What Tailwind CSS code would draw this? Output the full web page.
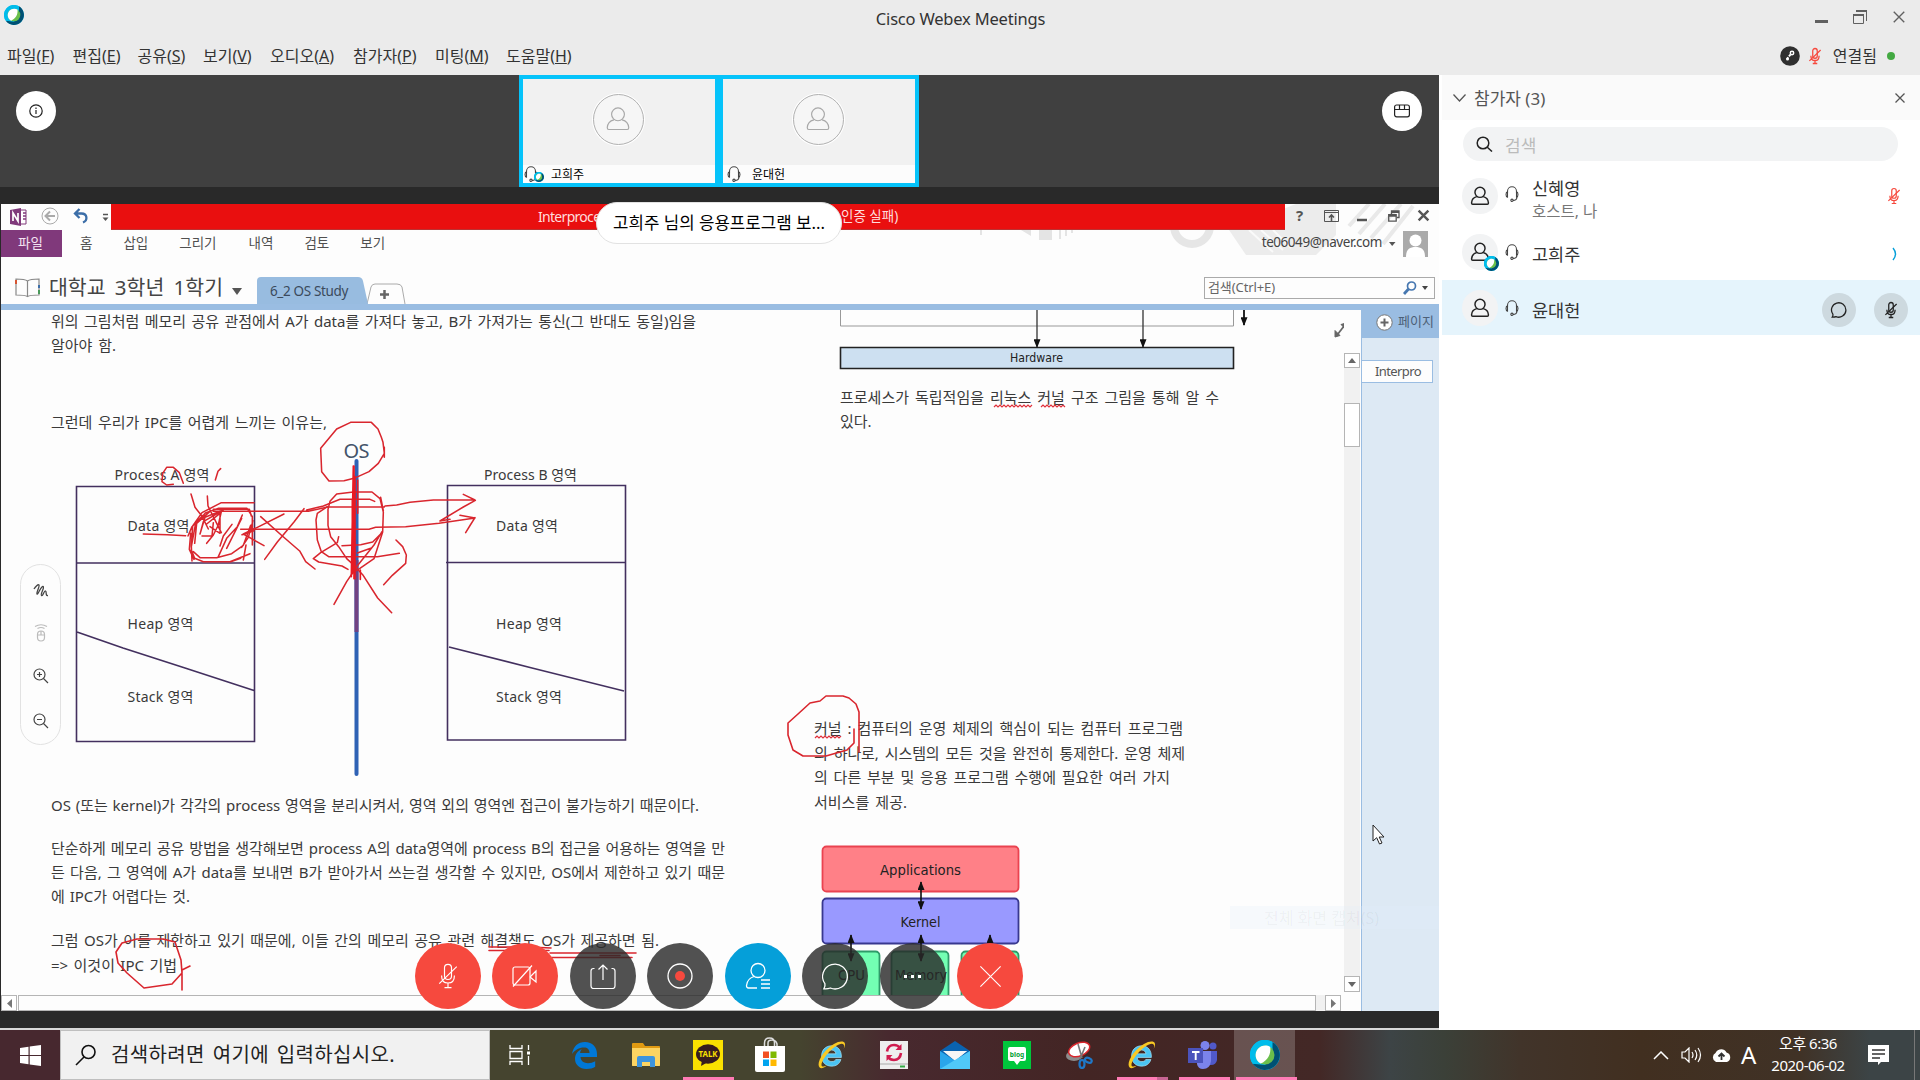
<!DOCTYPE html>
<html lang="ko">
<head>
<meta charset="utf-8">
<title>Cisco Webex Meetings</title>
<script src="https://cdn.jsdelivr.net/npm/@tailwindcss/browser@4"></script>
</head>
<body class="w-[1920px] h-[1080px] overflow-hidden flex flex-col bg-white font-['Noto_Sans','Noto_Sans_CJK_KR',sans-serif] text-[#333]">
<svg class="hidden">
  <defs>
    <symbol id="webex" viewBox="0 0 24 24">
      <circle cx="12" cy="12" r="12" fill="#00bceb"/>
      <path d="M2.2 19A12 12 0 1 0 18 1.6L15 6l4 6-7 8z" fill="#005073"/>
      <path d="M18 1.6A12 12 0 0 0 2.2 19L8 18 18 8z" fill="#00bceb"/>
      <circle cx="12" cy="12" r="7.6" fill="#6abf4b"/>
      <path d="M8.5 18.8C4 16.500 3.400 10.500 6.200 7.200 9 3.800 13.500 3.800 16.200 5.500 17 11.500 14 16.500 8.500 18.800z" fill="#fff"/>
    </symbol>
    <symbol id="headset" viewBox="0 0 16 20">
      <g fill="none" stroke="currentColor" stroke-width="1.2">
        <path d="M3 9V7a5 5 0 0 1 10 0v2"/><path d="M3 7.500C.8 8 .8 13 3 13.500zM13 7.500C15.200 8 15.200 13 13 13.500z"/><path d="M13.500 13c0 3-2 4.200-4.500 4.200"/><circle cx="8" cy="17" r="1.300"/>
      </g>
    </symbol>
    <symbol id="person" viewBox="0 0 24 24">
      <g fill="none" stroke="currentColor"><circle cx="12" cy="8" r="5.500"/><path d="M8.500 12.700C5 13.500 3 15.500 2.800 19.500c0 1 .4 1.500 1.200 1.500h16c.8 0 1.200-.5 1.200-1.500-.2-4-2.200-6-5.700-6.800"/></g>
    </symbol>
    <symbol id="micoff" viewBox="0 0 24 24">
      <g fill="none" stroke="currentColor"><rect x="9" y="2" width="6" height="13" rx="3"/><path d="M6.500 11.500c0 4 2 6.500 5.500 6.500s5.500-2.500 5.500-6.500M12 18v4M9 22h6M4.500 18.500L19.500 4"/></g>
    </symbol>
    <symbol id="bubble" viewBox="0 0 24 24">
      <path d="M3 21.500c.9-1.300 1.100-2.600.8-3.900A9.600 9.600 0 1 1 8 20.900c-1.500.6-3.200.8-5 .6z" fill="none" stroke="currentColor"/>
    </symbol>
    <symbol id="x" viewBox="0 0 24 24"><path d="M3 3l18 18M21 3L3 21" fill="none" stroke="currentColor"/></symbol>
    <symbol id="ie" viewBox="0 0 32 32">
      <path d="M16 6c6.500 0 10.500 4.600 10.200 12H11.500c.3 3 2.300 4.300 4.900 4.300 2 0 3.300-.7 4-2.200h5.300C24.300 24.800 20.800 27 16.200 27 9.600 27 5.800 22.600 5.800 16.500S9.800 6 16 6zm-4.400 8.300h8.900c-.2-2.500-2-3.900-4.400-3.900-2.500 0-4.100 1.500-4.500 3.900z" fill="#4ac4f3" stroke="#a9e6fb" stroke-width=".7"/>
      <path d="M3.800 28.500C-.5 24 8 10 18.500 4 24 .8 29 .6 29.800 3.500c.4 1.600 0 3.500-1.200 5.800 1-3.600.4-5.500-2.100-5.400-3 0-9 3.800-14 9.600C6.800 20 4 26.800 6.700 27.300c1.100.2 2.600-.2 4.300-1.100-2.600 2.500-5.600 3.700-7.200 2.300z" fill="#f9c924"/>
    </symbol>
  </defs>
</svg>

<!-- window header -->
<header class="h-[75px] shrink-0 bg-[#ebebeb] flex flex-col">
  <div class="h-[38px] flex items-center justify-between px-1">
    <svg class="size-5 -mt-2" viewBox="0 0 24 24"><use href="#webex"/></svg>
    <h1 class="ml-[82px] text-[16.500px] tracking-[-0.2px]">Cisco Webex Meetings</h1>
    <div class="flex items-center gap-[25px] mr-[10px] -mt-1 text-[#606060]">
      <svg width="13" height="14"><path d="M0 11.500h13" stroke="currentColor" stroke-width="3"/></svg>
      <svg width="14" height="14" fill="none" stroke="currentColor"><path d="M.5 4.500h10v9H.5z"/><path d="M0 5h11" stroke-width="2"/><path d="M3 1h11" stroke-width="2"/><path d="M13.500 1v10"/></svg>
      <svg width="14" height="14" class="stroke-[2.400]"><use href="#x"/></svg>
    </div>
  </div>
  <div class="h-9 flex items-center justify-between text-[16px]">
    <nav class="flex h-9 pl-[7px] leading-9 whitespace-nowrap">
      <span class="w-[65.500px]">파일(<u>F</u>)</span><span class="w-[65px]">편집(<u>E</u>)</span><span class="w-[65.500px]">공유(<u>S</u>)</span><span class="w-[67px]">보기(<u>V</u>)</span><span class="w-[83px]">오디오(<u>A</u>)</span><span class="w-[82px]">참가자(<u>P</u>)</span><span class="w-[71px]">미팅(<u>M</u>)</span><span>도움말(<u>H</u>)</span>
    </nav>
    <div class="flex items-center mr-[25px]">
      <svg width="20" height="20"><circle cx="10" cy="10" r="9.800" fill="#2f2f2f"/><circle cx="12" cy="7" r="1.700" fill="none" stroke="#fff" stroke-width="1.500"/><path d="M10.500 8.500L7 13" stroke="#fff" stroke-width="2" stroke-dasharray="2.500 1"/><circle cx="7.500" cy="13" r="1.500" fill="#fff"/></svg>
      <svg class="ml-[6px] size-[18px] text-[#f6493e] stroke-[1.7]"><use href="#micoff"/></svg>
      <span class="ml-[9px] leading-9">연결됨</span>
      <span class="ml-[10px] size-2 rounded-full bg-[#43a942]"></span>
    </div>
  </div>
</header>

<div class="h-[955px] shrink-0 flex">
<main class="relative w-[1439px] h-[955px] flex flex-col bg-[#292929]">
  <!-- video strip -->
  <section class="h-[112px] bg-[#404040] flex justify-between">
    <div class="mt-4 ml-4 size-10 rounded-full bg-white flex items-center justify-center">
      <svg width="14" height="14" fill="none" stroke="#222" stroke-width="1.200"><circle cx="7" cy="7" r="6.200"/><path d="M7 6v4M7 3.600v1.300"/></svg>
    </div>
    <div class="flex">
      <div class="w-[200px] h-[112px] border-4 border-[#05c3fa] bg-[#f1f1f1] flex flex-col">
        <div class="h-[86px] pb-[6px] pr-[2px] flex items-center justify-center"><div class="size-[51px] rounded-full border border-[#b0b0b0] ring-1 ring-white bg-[#f6f6f6] flex items-center justify-center"><svg class="size-[28px] text-[#a8a8a8]"><use href="#person"/></svg></div></div>
        <div class="flex-1 bg-[#fcfcfc] flex items-center relative"><svg class="w-4 h-[18px] text-[#444]"><use href="#headset"/></svg><svg class="absolute left-[11px] top-[7px] size-[10px]" viewBox="0 0 24 24"><use href="#webex"/></svg><span class="ml-[12px] mt-[2px] text-[12px] leading-none text-black">고희주</span></div>
      </div>
      <div class="w-[200px] h-[112px] border-4 border-[#05c3fa] bg-[#f1f1f1] flex flex-col">
        <div class="h-[86px] pb-[6px] pr-[2px] flex items-center justify-center"><div class="size-[51px] rounded-full border border-[#b0b0b0] ring-1 ring-white bg-[#f6f6f6] flex items-center justify-center"><svg class="size-[28px] text-[#a8a8a8]"><use href="#person"/></svg></div></div>
        <div class="flex-1 bg-[#fcfcfc] flex items-center pl-[3px]"><svg class="w-4 h-[18px] text-[#444]"><use href="#headset"/></svg><span class="ml-[10px] mt-[2px] text-[12px] leading-none text-black">윤대헌</span></div>
      </div>
    </div>
    <div class="mt-4 mr-[17px] size-10 rounded-full bg-white flex items-center justify-center">
      <svg width="16" height="14" fill="none" stroke="#222" stroke-width="1.200"><rect x=".6" y="1" width="14.800" height="11.800" rx="2"/><path d="M.6 5.500h14.800M5.500 1v4.500M10.500 1v4.500"/></svg>
    </div>
  </section>

  <!-- shared OneNote window -->
  <section class="mt-[17px] ml-px h-[807px] w-[1438px] flex flex-col bg-[#fdfdfd] text-[#444]">
    <div class="relative h-[106px] flex flex-col border-b-[6px] border-[#9abde2]">
      <svg class="absolute right-0 top-0" width="480" height="60" fill="none">
        <path d="M22 26v6M62 26l10 0 0 6zM80 26h13v10H80zM101 26v9M107 26v6M113 26v3" stroke="none" fill="#e4e4e4"/>
        <path d="M22 26v5M101 26v9M107 26v6M113 26v3" stroke="#e4e4e4" stroke-width="2"/>
        <path d="M215 22a18 18 0 0 0 36 0" stroke="#e6e6e6" stroke-width="8"/>
        <path d="M270 26l17 25h70l20-20V0h-40z" fill="#ececec"/>
        <path d="M390 22L410 0M400 30l26-30M412 34L442 0M424 40l30-38" stroke="#e9e9e9" stroke-width="4"/>
        <path d="M290 26l24 22M302 26l22 20M314 26l18 18" stroke="#fafafa" stroke-width="2"/>
      </svg>
      <div class="relative h-[26px] flex">
        <div class="w-[110px] flex items-center">
          <svg class="ml-[9px]" width="18" height="18"><path d="M7 2h9v14H7z" fill="#fff" stroke="#80397b"/><path d="M13 5h3M13 8h3M13 11h3" stroke="#80397b" stroke-width="1.500"/><path d="M0 2l11-2v18L0 16z" fill="#80397b"/><path d="M3 13V5l5 8V5" fill="none" stroke="#fff" stroke-width="1.700"/></svg>
          <svg class="ml-[13px] -mt-[2px]" width="18" height="18" fill="none" stroke="#aaa"><circle cx="9" cy="9" r="8"/><path d="M14 9H5M9 4.500L4.500 9 9 13.500" stroke-width="2"/></svg>
          <svg class="ml-[14px] -mt-[2px]" width="16" height="16" fill="none" stroke="#3c6ea8" stroke-width="2.300"><path d="M6.500 1L2 5.500 6.500 10M2 5.500h6.500c6 0 6.500 7 1.500 9"/></svg>
          <svg class="ml-[13px]" width="7" height="9"><path d="M1 1.500h5" stroke="#555" stroke-width="1.500"/><path d="M.5 4.500h6l-3 3.500z" fill="#555"/></svg>
        </div>
        <div class="w-[1174px] h-[26px] bg-[#e90f0f] border-b border-[#b33] flex items-center text-[14px] text-[#ffdcdc] whitespace-nowrap leading-none">
          <span class="ml-[427px] w-[303px] tracking-[-0.7px]">Interprocess</span><span class="text-[13.500px]">인증 실패)</span>
        </div>
        <div class="flex items-center text-[#555] ml-[11px] gap-[18px]">
          <b class="text-[15px] leading-none w-[10px] -mt-1">?</b>
          <svg width="15" height="12" fill="none" stroke="currentColor" class="-mt-[3px]"><path d="M.5.5h14v11H.5zM.5 2.500h14" /><path d="M7.500 11V5M5 7.500L7.500 5 10 7.500" stroke-width="1.600"/></svg>
          <svg width="10" height="12"><path d="M0 9h10" stroke="currentColor" stroke-width="2.500"/></svg>
          <svg class="ml-[3px] -mt-[3px]" width="12" height="12" fill="none" stroke="currentColor" stroke-width="1.300"><path d="M.7 4.700h7.500v6.500H.7zM.7 6h7.500M3.500 4V1h7.500v6.500H9M3.500 2.300H11"/></svg>
          <svg class="stroke-[4.500] -ml-px size-[13px] -mt-[3px]"><use href="#x"/></svg>
        </div>
      </div>
      <div class="relative h-[27px] flex items-center justify-between text-[13.500px] leading-none">
        <div class="flex items-center h-[27px] text-[#505050]">
          <span class="w-[61px] h-[27px] bg-[#80397b] text-[#f3e4f2] flex items-center justify-center pr-[2px]">파일</span>
          <span class="ml-[18px]">홈</span><span class="ml-[31px]">삽입</span><span class="ml-[31px]">그리기</span><span class="ml-[32px]">내역</span><span class="ml-[31px]">검토</span><span class="ml-[31px]">보기</span>
        </div>
        <div class="flex items-center mr-[11px]">
          <span class="text-[13.500px] tracking-[-0.45px] -mt-[2px]">te06049@naver.com</span>
          <svg class="ml-[7px]" width="7" height="4"><path d="M0 0h6.500L3.200 4z" fill="#555"/></svg>
          <svg class="ml-[7px]" width="25" height="26"><path d="M0 0h25v26H0z" fill="#aaa"/><circle cx="12.500" cy="9.500" r="6" fill="#fff"/><path d="M3 26c0-8 4-10 9.500-10S22 18 22 26z" fill="#fff"/></svg>
        </div>
      </div>
      <div class="flex-1 flex items-end relative">
        <svg class="ml-[14px] mb-[6px]" width="25" height="21" fill="none" stroke="#888" stroke-width="1.200"><path d="M12.500 4C10 2 5 2 1 2v16c4 0 9 0 11.500 1.500C15 18 20 18 24 18V2c-4 0-9 0-11.500 2zM12.500 4v15"/><path d="M1 3v4" stroke="#d65532" stroke-width="2"/><path d="M24 8v3" stroke="#3c6ea8" stroke-width="2"/><path d="M24 13v4" stroke="#4a9a5a" stroke-width="2"/></svg>
        <span class="ml-[9px] mb-[7px] text-[20.500px] leading-[20px] whitespace-nowrap w-[174px] [text-align-last:justify]">대학교 3학년 1학기</span>
        <svg class="ml-[9px] mb-[9px]" width="10" height="7"><path d="M0 0h10L5 7z" fill="#555"/></svg>
        <svg class="absolute left-[256px] bottom-0" width="150" height="27"><path d="M110 27l4-17q1-3 4-3h22q4 0 5 3l3 17" fill="#fdfdfd" stroke="#aaa"/><path d="M123 17.500h9M127.500 13v9" stroke="#666" stroke-width="2.500"/><path d="M0 27V4q0-4 4-4h97q4 0 5 4l5 23z" fill="#98bce0"/></svg>
        <span class="absolute left-[269px] bottom-[6px] text-[13.500px] leading-[14px] tracking-[-0.35px] text-[#3b4a5c]">6_2 OS Study</span>
        <div class="absolute right-[4px] bottom-[5px] w-[231px] h-[22px] border border-[#aaa] bg-[#fdfdfd] flex items-center pl-[3px] text-[13px] leading-none text-[#666]">
          <span class="tracking-[-0.1px] flex-1 -mt-[2px]">검색(Ctrl+E)</span>
          <svg width="14" height="14" fill="none" stroke="#4677b0"><circle cx="8.500" cy="5" r="4" stroke-width="1.700"/><path d="M5.500 8L1 13" stroke-width="2.800"/></svg>
          <svg class="ml-[5px] mr-[5px]" width="7" height="4"><path d="M0 0h6L3 4z" fill="#444"/></svg>
        </div>
      </div>
    </div>

    <div class="h-[701px] flex">
      <div class="w-[1360px] flex flex-col">
        <div class="h-[685px] flex">
          <!-- note canvas: everything here is placed freely by its author -->
          <div class="relative w-[1343px] h-[685px] overflow-hidden text-[15px] leading-6 text-[#3a3a3a]">
            <div class="absolute left-[50px] top-[-1px] whitespace-nowrap">
              <p class="w-[645px] [text-align-last:justify]">위의 그림처럼 메모리 공유 관점에서 A가 data를 가져다 놓고, B가 가져가는 통신(그 반대도 동일)임을</p>
              <p class="w-[65px] [text-align-last:justify]">알아야 함.</p>
              <p class="mt-[53px] w-[276px] [text-align-last:justify]">그런데 우리가 IPC를 어렵게 느끼는 이유는,</p>
            </div>
            <div class="absolute left-[50px] top-[483px] whitespace-nowrap">
              <p class="w-[648px] [text-align-last:justify]">OS (또는 kernel)가 각각의 process 영역을 분리시켜서, 영역 외의 영역엔 접근이 불가능하기 때문이다.</p>
              <p class="mt-[19px] w-[674px] [text-align-last:justify] tracking-[-0.1px]">단순하게 메모리 공유 방법을 생각해보면 process A의 data영역에 process B의 접근을 어용하는 영역을 만</p>
              <p class="w-[674px] [text-align-last:justify]">든 다음, 그 영역에 A가 data를 보내면 B가 받아가서 쓰는걸 생각할 수 있지만, OS에서 제한하고 있기 때문</p>
              <p class="w-[139px] [text-align-last:justify]">에 IPC가 어렵다는 것.</p>
              <p class="mt-[20px] w-[608px] [text-align-last:justify]">그럼 OS가 이를 제한하고 있기 때문에, 이들 간의 메모리 공유 관련 해결책도 OS가 제공하면 됨.</p>
              <p class="mt-px w-[126px] [text-align-last:justify]">=&gt; 이것이 IPC 기법</p>
            </div>
            <div class="absolute left-[839px] top-[75px] whitespace-nowrap">
              <p class="w-[379px] [text-align-last:justify]">프로세스가 독립적임을 리눅스 커널 구조 그림을 통해 알 수</p>
              <p>있다.</p>
            </div>
            <div class="absolute left-[813px] top-[406px] whitespace-nowrap leading-[24.600px]">
              <p class="w-[369px] [text-align-last:justify]">커널 : 컴퓨터의 운영 체제의 핵심이 되는 컴퓨터 프로그램</p>
              <p class="w-[371px] [text-align-last:justify] tracking-[-0.1px]">의 하나로, 시스템의 모든 것을 완전히 통제한다. 운영 체제</p>
              <p class="w-[356px] [text-align-last:justify]">의 다른 부분 및 응용 프로그램 수행에 필요한 여러 가지</p>
              <p class="w-[93px] [text-align-last:justify]">서비스를 제공.</p>
            </div>
            <svg class="absolute inset-0" width="1343" height="685" viewBox="1 310 1343 685" fill="none">
              <defs><marker id="arr" viewBox="0 0 10 8" refX="9" refY="4" markerWidth="9" markerHeight="7" markerUnits="userSpaceOnUse" orient="auto-start-reverse"><path d="M0 0L10 4 0 8z" fill="#111"/></marker></defs>
              <!-- process diagrams -->
              <g stroke="#43305f" stroke-width="1.600">
                <path d="M76.500 486.500h178v255h-178zM76.500 563h178M77 632l46 16 62 20 69 22.500"/>
                <path d="M447.500 485.500h178v254.500h-178zM446 562.500h179.500M449 647l83 21 92 23"/>
              </g>
              <path d="M356.500 461v313" stroke="#2f62b5" stroke-width="4" stroke-linecap="round"/>
              <path d="M356.500 560v72" stroke="#714282" stroke-width="4"/>
              <g fill="#3a3a3a" font-size="14">
                <text x="114.500" y="480" textLength="95">Process A 영역</text><text x="484" y="480" textLength="93">Process B 영역</text>
                <text x="127.500" y="530.500" textLength="62">Data 영역</text><text x="127.500" y="629" textLength="66">Heap 영역</text><text x="127.500" y="702" textLength="66">Stack 영역</text>
                <text x="496" y="530.500" textLength="62">Data 영역</text><text x="496" y="629" textLength="66">Heap 영역</text><text x="496" y="702" textLength="66">Stack 영역</text>
              </g>
              <text x="343.500" y="458" font-size="20" fill="#44546a" textLength="26">OS</text>
              <!-- linux hardware diagram -->
              <path d="M840.500 310v16h393v-16" stroke="#999"/>
              <path d="M840.500 347.500h393v21h-393z" fill="#cde0f1" stroke="#222" stroke-width="1.600"/>
              <path d="M1037 310v37" stroke="#333" stroke-width="1.300" marker-end="url(#arr)"/><path d="M1143 310v37" stroke="#333" stroke-width="1.300" marker-end="url(#arr)"/><path d="M1244 310v15" stroke="#111" stroke-width="1.800" marker-end="url(#arr)"/>
              <text x="1010" y="362" font-size="12" fill="#222" font-family="DejaVu Sans, sans-serif" textLength="53" lengthAdjust="spacingAndGlyphs">Hardware</text>
              <!-- kernel layers -->
              <g stroke-width="1.800">
                <rect x="822.500" y="846.500" width="196" height="45" rx="4" fill="#ff8087" stroke="#ea4350"/>
                <rect x="822.500" y="898.500" width="196" height="45" rx="4" fill="#9999ff" stroke="#38388f"/>
                <g fill="#73ffb3" stroke="#2f9a69"><rect x="822.500" y="951.500" width="57" height="60" rx="4"/><rect x="891.500" y="951.500" width="57" height="60" rx="4"/><rect x="961.500" y="951.500" width="57" height="60" rx="4"/></g>
              </g>
              <g stroke="#111" stroke-width="1.600"><path d="M921 882v27" marker-start="url(#arr)" marker-end="url(#arr)"/><path d="M851 935v26" marker-start="url(#arr)" marker-end="url(#arr)"/><path d="M921 935v26" marker-start="url(#arr)" marker-end="url(#arr)"/><path d="M990 935v26" marker-start="url(#arr)" marker-end="url(#arr)"/></g>
              <g font-family="DejaVu Sans, sans-serif" font-size="13.500" fill="#222"><text x="880" y="874.500" textLength="81" lengthAdjust="spacingAndGlyphs">Applications</text><text x="900.500" y="926.500" textLength="40" lengthAdjust="spacingAndGlyphs">Kernel</text><text x="838" y="979.500" textLength="27" lengthAdjust="spacingAndGlyphs">CPU</text><text x="895" y="979.500" textLength="52" lengthAdjust="spacingAndGlyphs">Memory</text></g>
              <!-- spelling squiggles -->
              <g stroke="#e0303a" stroke-width="1.200"><path d="M994 407l2-2 2 2 2-2 2 2 2-2 2 2 2-2 2 2 2-2 2 2 2-2 2 2 2-2 2 2 2-2 2 2 2-2 2 2 2-2"/><path d="M1041 407l2-2 2 2 2-2 2 2 2-2 2 2 2-2 2 2 2-2 2 2 2-2 2 2"/><path d="M815 738l2-2 2 2 2-2 2 2 2-2 2 2 2-2 2 2 2-2 2 2 2-2 2 2 2-2"/></g>
              <!-- red ink -->
              <g transform="translate(180 410) scale(.33333)" stroke="#d9262e" stroke-width="4.600" stroke-linecap="round" stroke-linejoin="round">
                <path d="M512 37h62l20 20 10 25 5 15 4 33-18 30-28 25-45 20-30 7-45 1-22-28-3-70 48-58 42-20M613 112v30"/>
                <path d="M-20 172h-20l-12 18-2 25 14 10 20-2M-20 172l18 16 12 32M122 176l-8 8-8 26"/>
                <path d="M33 252l12 40 20 25 20 40M82 258l2 30 40 80M80 400l20-25 15-30 10-45M66 378h30l4-40M222 278h-98l-58 30-28 40-4 60 2 45M60 372l15-50 55-22-60 35-8 30M80 342l40-32 0 60-30-20M34 420l10 25 26 10h82l30-10M34 410l12-65 30-36 40-14 85 0 16 25 0 85M44 400l6-60 40-36M120 408l10-30 26-35M115 440l25-55 32-35 15-35M140 415l45-90M40 425l20 18h50l45-12 35-25 22-60M185 412l20-30 14-50M24 378l12-28 34-35M-110 372l72 2 55 3M42 448l-14-30 4-48M100 298h108l6 20M150 455l60-24M190 450l8-45"/>
                <path d="M100 304h285l58-13h170M380 300l50-12 50-20h90l14 6M615 288l35-3 40-8 70-7h125l-35-17M886 271l-36 20-70 42M182 358h385l20-6 90-2 100-10 108-16-45-8M885 323l-14 22-14 23M780 333l30-5"/>
                <path d="M312 312l-80 40-42 20 62 35M186 374l36-12M242 320l65 58 52 45 18 32 28 22M372 296l-30 40-50 60-38 52"/>
                <path d="M470 252l-20 22-6 24v48l8 34 24 30 24 36 20 18 28 30 45 70 42 44M470 252l50-6h56l24 20 10 40-2 60-26 80-52 36M412 310l-4 20 4 60 12 35 22 15h70M412 310l30-20M608 366l-30 30-36 8-56 3M602 262l8 40M606 365l-24 40-48 60-34 50-38 68M476 380l-4 18-50 30-22 18 16 10 70 12 18 10M446 440l146 0 66-10M572 415l-40 14M648 390l20 20 11 25-2 25-40 36-26 28"/>
                <path d="M520 168l-6 332M525 200v306M533 210v100M517 270v220M541 480v28M522 168v338" stroke="#e81923" stroke-width="5"/>
              </g>
              <g stroke="#d9262e" stroke-width="1.600" stroke-linecap="round" stroke-linejoin="round">
                <path d="M859 752v-40l-3-8-7-6-6-2h-17l-6 5-10 2-12 11-10 9v12l5 15 10 6h23l21-6 7-7v-14"/>
                <path d="M489 947h40l22 1M489 950.500h60M550 953h86M552 957.500h80M600 955.500h20"/>
                <path d="M182 990v-20l8-4M182 973l-10 11-28 4-17-15-9-10-2-11 6-9 15-4h26l12 3 6 18 1 13"/>
              </g>
              <path d="M1337.500 334.500l7-9" stroke="#666" stroke-width="1.800"/><path d="M1335 337v-6.500l5 5zM1346 323v6.500l-5-5z" fill="#666" stroke="#666"/>
            </svg>
          </div>
          <!-- vertical scrollbar -->
          <div class="w-4 mt-[43px] h-[639px] bg-[#f1f1f1] flex flex-col">
            <div class="h-[15px] border border-[#b5b5b5] bg-white flex items-center justify-center"><svg width="8" height="5"><path d="M0 5h8L4 0z" fill="#666"/></svg></div>
            <div class="mt-[35px] h-11 border border-[#b5b5b5] bg-white"></div>
            <div class="mt-auto h-4 border border-[#b5b5b5] bg-white flex items-center justify-center"><svg width="8" height="5"><path d="M0 0h8L4 5z" fill="#666"/></svg></div>
          </div>
        </div>
        <div class="h-4 flex">
          <div class="w-4 h-4 border border-[#b5b5b5] bg-white flex items-center justify-center"><svg width="5" height="9"><path d="M5 0v9L0 4.500z" fill="#777"/></svg></div>
          <div class="ml-px w-[1298px] h-4 border border-[#b5b5b5] bg-[#fdfdfd]"></div>
          <div class="w-[9px] bg-[#f1f1f1]"></div>
          <div class="w-4 h-4 border border-[#b5b5b5] bg-white flex items-center justify-center"><svg width="5" height="9"><path d="M0 0v9l5-4.500z" fill="#777"/></svg></div>
        </div>
      </div>
      <!-- page list -->
      <div class="w-[78px] border-l border-[#9abde2] bg-[#dde9f4] flex flex-col text-[13px] leading-none whitespace-nowrap">
        <div class="h-[28px] bg-[#9abde2] pl-[14px] flex items-center gap-[5px] text-[#4d6076]">
          <svg class="shrink-0 -mt-1" width="17" height="17"><circle cx="8.500" cy="8.500" r="7.700" fill="#fff" stroke="#777"/><path d="M4.500 8.500h8M8.500 4.500v8" stroke="#666" stroke-width="2"/></svg><span class="-mt-[5px]">페이지</span>
        </div>
        <div class="mt-[22px] w-[71px] h-[23px] border border-l-0 border-[#9abde2] bg-[#fdfdfd] flex items-center pl-[13px] text-[#555] tracking-[-0.6px]">Interpro</div>
      </div>
    </div>
  </section>
  <div class="mt-[17px] h-[2px] bg-[#d8d8d8]"></div>

  <!-- fading context menu item -->
  <div class="absolute left-[1230px] top-[831px] w-[209px] h-[23px] bg-[#e4effa]/25 flex items-center pl-[34px] text-[16px] leading-none text-[#000]/5 whitespace-nowrap">전체 화면 캡처(S)</div>

  <!-- share banner -->
  <div class="absolute left-[596px] top-[127px] w-[246px] h-[42px] rounded-full bg-white border border-[#e2e2e2] flex items-center justify-center text-[16.800px] leading-none text-black whitespace-nowrap">고희주 님의 응용프로그램 보...</div>

  <!-- annotation tools -->
  <div class="absolute left-5 top-[489px] w-[41px] h-[181px] rounded-full bg-[#fdfdfd] border border-[#e2e2e2] flex flex-col items-center">
    <svg class="mt-[18px]" width="16" height="16" fill="none" stroke="#444" stroke-width="1.300"><path d="M1 6c1.500-2.500 4-5 5-4s-3 8-2 9 4-8 6-7.500-3 8-1.500 9 2.500-5 4-4.500-.5 5 2.500 4.500"/></svg>
    <svg class="mt-[25px]" width="16" height="18" fill="none" stroke="#bbb" stroke-width="1.200"><rect x="4.500" y="7" width="7" height="10" rx="3.500"/><path d="M4.500 11h7M8 7v4M4.500 4.500Q8 2.500 11.500 4.500M2 2.500q6-3.500 12 0"/></svg>
    <svg class="mt-[26px]" width="16" height="16" fill="none" stroke="#444" stroke-width="1.200"><circle cx="6.500" cy="6.500" r="5.500"/><path d="M10.500 10.500L15 15M6.500 4v5M4 6.500h5"/></svg>
    <svg class="mt-[29px]" width="16" height="16" fill="none" stroke="#444" stroke-width="1.200"><circle cx="6.500" cy="6.500" r="5.500"/><path d="M10.500 10.500L15 15M4 6.500h5"/></svg>
  </div>

  <!-- meeting controls -->
  <div class="absolute left-[414.500px] top-[868px] flex gap-[11.500px] text-white">
    <div class="size-[66px] rounded-full bg-[#f6493e] flex items-center justify-center"><svg class="size-[28px]"><use href="#micoff"/></svg></div>
    <div class="size-[66px] rounded-full bg-[#f6493e] flex items-center justify-center"><svg width="28" height="24" fill="none" stroke="currentColor" stroke-width="1.200"><rect x="2" y="3" width="17" height="18" rx="2"/><path d="M19 13l6-6v11l-6-5M2 22.500L21 1.500"/></svg></div>
    <div class="size-[66px] rounded-full bg-[#292929]/81 flex items-center justify-center"><svg width="26" height="26" fill="none" stroke="currentColor" stroke-width="1.200"><path d="M4.500 5.500H3.500Q1 5.500 1 8v15q0 2.500 2.500 2.500h19Q25 25.500 25 23V8q0-2.500-2.500-2.500H21.500M13 17V2M8.500 6.500L13 2l4.500 4.500"/></svg></div>
    <div class="size-[66px] rounded-full bg-[#292929]/81 flex items-center justify-center"><svg width="26" height="26"><circle cx="13" cy="13" r="12" fill="none" stroke="currentColor" stroke-width="1.300"/><circle cx="13" cy="13" r="5" fill="#f6493e"/></svg></div>
    <div class="size-[66px] rounded-full bg-[#059fd9] flex items-center justify-center"><svg width="26" height="28" fill="none" stroke="currentColor" stroke-width="1.300"><circle cx="13" cy="8.500" r="7"/><path d="M9 14.500c-5 1.500-7 4-7.500 9 0 2 1 2.500 2 2.500H12M16 18h9M16 22h9M16 26h9"/></svg></div>
    <div class="size-[66px] rounded-full bg-[#292929]/81 flex items-center justify-center"><svg class="size-[31px]"><use href="#bubble"/></svg></div>
    <div class="size-[66px] rounded-full bg-[#292929]/81 flex items-center justify-center gap-[4px]"><i class="size-[3px] bg-white"></i><i class="size-[3px] bg-white"></i><i class="size-[3px] bg-white"></i></div>
    <div class="size-[66px] rounded-full bg-[#f6493e] flex items-center justify-center"><svg class="size-[27px]"><use href="#x"/></svg></div>
  </div>

  <svg class="absolute left-[1372px] top-[749px]" width="14" height="21"><path d="M1 1v16l3.700-3.300L7.500 20l2.500-1-2.800-6H12z" fill="#fff" stroke="#222"/></svg>
</main>

<!-- participants -->
<aside class="flex-1 ml-[3px] flex flex-col bg-white">
  <div class="h-[45px] bg-[#fafafa] flex items-center pl-[11px] pr-[14px] text-[17px] text-[#555]">
    <svg width="13" height="8" fill="none" stroke="currentColor" stroke-width="1.300"><path d="M.5.500l6 6.500 6-6.500"/></svg>
    <span class="ml-[8px] flex-1 leading-none mt-px">참가자 (3)</span>
    <svg class="size-3 stroke-[2.600]"><use href="#x"/></svg>
  </div>
  <div class="mt-[7px] ml-[21px] w-[435px] h-[34px] rounded-full bg-[#f2f3f4] flex items-center pl-[13px] text-[17px] text-[#bbb]">
    <svg width="17" height="16" fill="none" stroke="#222" stroke-width="1.500"><circle cx="7" cy="7" r="5.800"/><path d="M11 11l5 4.500"/></svg>
    <span class="ml-[12px] mt-[2px] leading-none">검색</span>
  </div>
  <div class="mt-[7px] h-[56px] flex items-center pl-[20px] pr-[17px]">
    <div class="size-9 rounded-full bg-[#f2f3f4] flex items-center justify-center"><svg class="size-[22px] text-[#222] stroke-[1.600]"><use href="#person"/></svg></div>
    <svg class="ml-[6px] -mt-1 w-4 h-[18px] text-[#444]"><use href="#headset"/></svg>
    <div class="ml-[12px] flex-1"><div class="text-[17.500px] leading-[24px] mt-[6px]">신혜영</div><div class="text-[15.500px] leading-[22px] text-[#777]">호스트, 나</div></div>
    <svg class="size-[18px] text-[#f6493e] stroke-[1.600]"><use href="#micoff"/></svg>
  </div>
  <div class="h-[56px] flex items-center pl-[20px] pr-[23px]">
    <div class="relative size-9 rounded-full bg-[#f2f3f4] flex items-center justify-center"><svg class="size-[22px] text-[#222] stroke-[1.600]"><use href="#person"/></svg><svg class="absolute left-[22px] top-[22px] size-[15px]" viewBox="0 0 24 24"><use href="#webex"/></svg></div>
    <svg class="ml-[6px] w-4 h-[18px] text-[#444]"><use href="#headset"/></svg>
    <span class="ml-[12px] flex-1 text-[17.500px] leading-none mt-[6px]">고희주</span>
    <svg class="mt-1" width="5" height="14" fill="none" stroke="#059fd9" stroke-width="1.400"><path d="M1 1q5 6 0 12"/></svg>
  </div>
  <div class="h-[55px] bg-[#e5f4fc] flex items-center pl-[20px] pr-[12px]">
    <div class="size-9 rounded-full bg-[#f2f3f4] flex items-center justify-center"><svg class="size-[22px] text-[#222] stroke-[1.600]"><use href="#person"/></svg></div>
    <svg class="ml-[6px] w-4 h-[18px] text-[#444]"><use href="#headset"/></svg>
    <span class="ml-[12px] flex-1 text-[17.500px] leading-none mt-[6px]">윤대헌</span>
    <div class="mt-1 size-[34px] rounded-full bg-[#cdd9df] flex items-center justify-center"><svg class="size-[18px] text-[#222] stroke-[1.700]"><use href="#bubble"/></svg></div>
    <div class="mt-1 ml-[18px] size-[34px] rounded-full bg-[#cdd9df] flex items-center justify-center"><svg class="size-[18px] text-[#222] stroke-[1.700]"><use href="#micoff"/></svg></div>
  </div>
</aside>
</div>

<!-- taskbar -->
<footer class="relative h-[50px] shrink-0 flex items-stretch text-white bg-[linear-gradient(90deg,#47282f_0px,#47282f_60px,#45442f_480px,#45442f_800px,#48292f_890px,#432524_1080px,#432826_1320px,#3d4446_1390px,#3b4038_1445px,#41342a_1520px,#412f20_1640px,#403226_1800px,#3c4446_1870px,#3c4446_1920px)]">
  <div class="w-[60px] flex items-center justify-center"><svg width="21" height="21" fill="#fff"><path d="M0 3l8.500-1.200V10H0zM9.700 1.600L21 0v10H9.700zM0 11h8.500v8.200L0 18zM9.700 11H21v10L9.700 19.400z"/></svg></div>
  <div class="w-[430px] bg-[#f1f1f1] border border-[#bfbfbf] flex items-center pl-[14px] text-[#222]">
    <svg width="22" height="22" fill="none" stroke="#111" stroke-width="1.600"><circle cx="13.500" cy="8" r="6.500"/><path d="M9 13l-8 8"/></svg>
    <span class="ml-[14px] w-[284px] text-[20px] leading-none whitespace-nowrap tracking-[0.35px] [text-align-last:justify]">검색하려면 여기에 입력하십시오.</span>
  </div>
  <div class="flex ml-[-1px]">
    <div class="w-[62px] flex items-center justify-center"><svg width="22" height="20" fill="none" stroke="#fff" stroke-width="1.300"><path d="M1 0v3.500h12V0M1 20v-3.500h12V20M1 6.500h12v7H1zM19.500 0v5M19.500 11v9"/><path d="M18 8h3" stroke-width="3"/></svg></div>
    <div class="w-[66px] flex items-center justify-center"><svg width="25" height="27" viewBox="0 0 25 27"><path d="M0 12C1.500 4 6 0 13 0c7.500 0 12 5 12 12v3H8.500c.3 4.200 3.500 6.200 7.500 6.200 2.700 0 5-.7 7.200-2v5.600C21 26.200 18 27 14.500 27 7.500 27 3 22.800 3 16.800c0-4.400 2.500-8 7-9.800-1.200 1-1.700 2.300-1.900 4h9.400C17.500 7.500 15.500 5.500 12 5.500 7 5.500 3 8 0 12z" fill="#0078d7"/></svg></div>
    <div class="w-[58px] flex items-center justify-center"><svg width="28" height="24"><path d="M0 1q0-1 1-1h10l2 3h14q1 0 1 1v19H0z" fill="#e09a12"/><path d="M0 5h28v17q0 1-1 1H1q-1 0-1-1z" fill="#fcd462"/><path d="M5 24v-9q0-2 2-2h14q2 0 2 2v9h-5v-5h-8v5z" fill="#3d94dd"/></svg></div>
    <div class="w-[66px] flex items-center justify-center"><svg width="30" height="30"><path d="M0 0h30v30H0z" fill="#fae100"/><ellipse cx="15" cy="14" rx="12" ry="9.700" fill="#371d1e"/><path d="M9 20l-1 6 7-4z" fill="#371d1e"/><text x="5.500" y="17.300" font-size="8.500" font-weight="bold" fill="#fae100" textLength="19" lengthAdjust="spacingAndGlyphs">TALK</text></svg></div>
    <div class="w-[57px] flex items-center justify-center"><svg width="30" height="36"><path d="M9.500 11V6q0-5 5-5t5 5v5M13 11V6q0-3 4-3t5 4v4" fill="none" stroke="#ddd" stroke-width="1.500"/><path d="M0 9h30v24q0 2-2 2H2q-2 0-2-2z" fill="#fff"/><path d="M8 14.500h6v6.500H8z" fill="#f25022"/><path d="M15.500 14.500h6v6.500h-6z" fill="#7fba00"/><path d="M8 22.500h6V29H8z" fill="#00a4ef"/><path d="M15.500 22.500h6V29h-6z" fill="#ffb900"/></svg></div>
    <div class="w-[66px] flex items-center justify-center"><svg class="size-[31px]"><use href="#ie"/></svg></div>
    <div class="w-[59px] flex items-center justify-center"><svg width="28" height="28"><path d="M0 0h28v28H0z" fill="#eee"/><path d="M0 23h28" stroke="#aaa"/><path d="M20 25.500h5" stroke="#3a4" stroke-width="2"/><g fill="none" stroke="#d01c4f" stroke-width="2.600"><path d="M7 10.500q1-6.500 7-6.500 4 0 6 3M21 12q-1 7-7 7-4 0-6-3"/></g><path d="M21.500 3v6h-6zM6.500 20v-6h6z" fill="#d01c4f"/></svg></div>
    <div class="w-[64px] flex items-center justify-center"><svg width="30" height="28"><path d="M0 10L15 0l15 10v18H0z" fill="#0a63b0"/><path d="M3 10h24L15 20z" fill="#f1f1f1"/><path d="M0 10l17 11L30 10v18H0z" fill="#2aa5ea"/><path d="M4 10h23L15 19z" fill="#f6f6f6"/><path d="M0 28L30 10v18z" fill="#50c8f8"/></svg></div>
    <div class="w-[60px] flex items-center justify-center"><svg width="28" height="28"><path d="M0 0h28v28H0z" fill="#00c73c"/><path d="M7 6h14q2 0 2 2v10q0 2-2 2h-4l-3 4-3-4H7q-2 0-2-2V8q0-2 2-2z" fill="#fff"/><text x="6.800" y="15.500" font-size="7.500" font-weight="bold" fill="#00a034" textLength="14.500" lengthAdjust="spacingAndGlyphs">blog</text></svg></div>
    <div class="w-[63px] flex items-center justify-center"><svg width="28" height="28"><ellipse cx="9" cy="15" rx="8" ry="5" fill="#8c8c8c"/><ellipse cx="14" cy="8.500" rx="11" ry="6.500" fill="#fff" stroke="#d8262c" stroke-width="1.500" transform="rotate(-22 14 8)"/><path d="M13 3l4 14M20 6l-5 12" stroke="#777" stroke-width="1.600"/><g fill="none" stroke="#1f78c8" stroke-width="2.200"><ellipse cx="17" cy="23" rx="2.500" ry="4"/><ellipse cx="23.500" cy="19.500" rx="3.500" ry="2.300" transform="rotate(25 24 19)"/></g></svg></div>
    <div class="w-[62px] flex items-center justify-center"><svg class="size-[31px]"><use href="#ie"/></svg></div>
    <div class="w-[62px] flex items-center justify-center"><svg width="30" height="28"><circle cx="25" cy="5" r="3.500" fill="#5059c9"/><circle cx="17" cy="4.500" r="4.500" fill="#7b83eb"/><path d="M20 10h9v9q-1 5-6 5-3 0-3-2z" fill="#5059c9"/><path d="M9 10h14v10q-1 8-8 8-5 0-6-5z" fill="#7b83eb"/><path d="M0 7h15v15H0z" fill="#4b53bc"/><path d="M4 11h7.500M7.700 11v8" stroke="#fff" stroke-width="1.900"/></svg></div>
    <div class="w-[61px] bg-white/20 flex items-center justify-center"><svg class="size-[30px]" viewBox="0 0 24 24"><use href="#webex"/></svg></div>
  </div>
  <div class="ml-auto flex items-center whitespace-nowrap">
    <svg width="16" height="9" fill="none" stroke="#fff" stroke-width="1.500"><path d="M1 8l7-7 7 7"/></svg>
    <svg class="ml-[12px]" width="21" height="16" fill="none" stroke="#fff" stroke-width="1.200"><path d="M1 5h3l4-4v14l-4-4H1zM11 5q2 3 0 6M14 3q3.500 5 0 10M17 1q5 7 0 14"/></svg>
    <svg class="ml-[9px]" width="21" height="15"><path d="M5 14a5 5 0 0 1-.5-9C6 1 13-1 15.500 4.500A5 5 0 0 1 16 14z" fill="#fff"/><path d="M10.500 12V6M7.500 8.500l3-3 3 3" fill="none" stroke="#333" stroke-width="1.800"/></svg>
    <span class="ml-[9px] text-[24px] leading-none w-4">A</span>
    <div class="ml-[12px] w-[78px] text-center text-[15px] leading-[22px] tracking-[-0.5px] -mt-[3px]">오후 6:36<br>2020-06-02</div>
    <svg class="ml-[21px]" width="21" height="20"><path d="M0 0h21v17h-8l-3 3v-3H0z" fill="#fff"/><path d="M4 5h13M4 9h13M4 13h8" stroke="#333" stroke-width="1.400"/></svg>
    <i class="ml-[25px] mr-[5px] w-px h-[50px] bg-[#777]"></i>
  </div>
  <i class="absolute left-[683px] bottom-0 w-[51px] h-[3px] bg-[#ff7bb5]"></i>
  <i class="absolute left-[1117px] bottom-0 w-[51px] h-[3px] bg-[#ff7bb5] border-r-[11px] border-[#c76593]"></i>
  <i class="absolute left-[1179px] bottom-0 w-[51px] h-[3px] bg-[#ff7bb5]"></i>
  <i class="absolute left-[1236px] bottom-0 w-[61px] h-[3px] bg-[#ff7bb5]"></i>
</footer>
</body>
</html>
